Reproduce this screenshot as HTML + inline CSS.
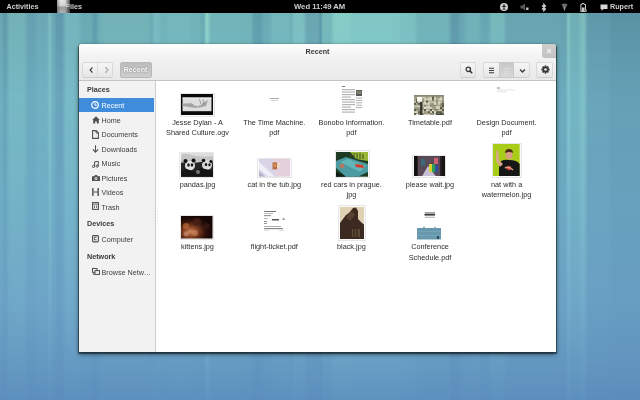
<!DOCTYPE html>
<html><head><meta charset="utf-8"><style>
*{margin:0;padding:0;box-sizing:border-box}
html,body{width:640px;height:400px;overflow:hidden;background:#6aa8b8;font-family:"Liberation Sans",sans-serif}
#wall{position:absolute;left:0;top:0;width:640px;height:400px;
 background:linear-gradient(180deg,#6aa8b6 0px,#6aa6ba 170px,#689ec0 300px,#5a8cbc 400px)}
#tint{position:absolute;left:0;top:0;width:640px;height:400px;background:linear-gradient(180deg,rgba(138,212,248,0) 14px,rgba(138,212,248,.2) 100px,rgba(128,192,245,.25) 200px,rgba(128,176,248,.2) 300px,rgba(100,140,220,.08) 400px)}
#stripes{position:absolute;left:0;top:0;width:640px;height:400px;background:linear-gradient(90deg,#68a6b0 0.83px,#68a6b0 1.67px,#5e9aa8 4.17px,#5e9aa8 5.83px,#72b2b6 9.50px,#72b2b6 24.00px,#64a0b0 28.00px,#64a0b0 34.00px,#6aa8b4 38.00px,#6aa8b4 47.00px,#7cbcbe 49.67px,#7cbcbe 50.33px,#6aa8b4 52.33px,#6aa8b4 53.67px,#5f98ac 57.00px,#5f98ac 62.00px,#74b4bb 66.00px,#74b4bb 78.00px,#6aaab2 82.00px,#6aaab2 90.50px,#5e9cab 94.17px,#5e9cab 95.83px,#6caeb4 99.00px,#6caeb4 100.50px,#72b2b6 104.00px,#72b2b6 148.00px,#6aaab2 150.83px,#6aaab2 151.67px,#78b8be 154.50px,#78b8be 158.00px,#70b2b6 162.00px,#70b2b6 165.50px,#74b6ba 169.50px,#74b6ba 189.00px,#70b2b6 193.00px,#70b2b6 199.00px,#6aaab2 202.33px,#6aaab2 203.67px,#8ad0c8 206.33px,#8ad0c8 207.67px,#72b4b8 211.00px,#72b4b8 238.00px,#70b2b6 242.00px,#70b2b6 250.50px,#5e9eab 254.50px,#5e9eab 260.50px,#6aabb3 264.50px,#6aabb3 269.00px,#74b6ba 273.00px,#74b6ba 288.00px,#6eb0b5 290.83px,#6eb0b5 291.67px,#7cbfc0 294.50px,#7cbfc0 303.00px,#68a6b0 307.00px,#68a6b0 318.00px,#5a98a8 320.33px,#5a98a8 320.67px,#74b8b8 323.00px,#74b8b8 330.50px,#86ccc6 334.50px,#86ccc6 349.00px,#80c6c4 353.00px,#80c6c4 398.00px,#7cc0c0 402.00px,#7cc0c0 414.00px,#70b2b6 418.00px,#70b2b6 448.00px,#5e99a9 452.00px,#5e99a9 457.00px,#66a5b0 461.00px,#66a5b0 463.00px,#70b0b6 467.00px,#70b0b6 478.00px,#66a6b0 482.00px,#66a6b0 488.00px,#76b8ba 492.00px,#76b8ba 503.00px,#68a4b0 507.00px,#68a4b0 558.00px,#64a0ae 562.00px,#64a0ae 565.50px,#80c0c0 568.17px,#80c0c0 568.83px,#6eaeb4 571.50px,#6eaeb4 578.00px,#7cbcbc 582.00px,#7cbcbc 584.00px,#6098aa 588.00px,#6098aa 608.00px,#5a92a4 612.00px,#5a92a4 638.00px);
 -webkit-mask-image:linear-gradient(180deg,#000 0px,rgba(0,0,0,.9) 150px,rgba(0,0,0,.45) 290px,rgba(0,0,0,.12) 400px)}
#topbar{position:absolute;left:0;top:0;width:640px;height:13px;background:#000;color:#cfcfcf;font-weight:bold;font-size:7.2px}
#topbar span{position:absolute;top:2px;white-space:nowrap;line-height:9px}
#win{position:absolute;left:79px;top:44px;width:477px;height:308px;background:#fff;border-radius:3px 3px 0 0;
 box-shadow:0 2px 5px rgba(0,0,0,.55),0 1px 1px 1px rgba(0,0,0,.45)}
#hdr{position:absolute;left:0;top:0;width:477px;height:37px;background:linear-gradient(180deg,#fefefe 0,#f3f3f3 35%,#e9e9e9 100%);border-bottom:1px solid #c4c4c4;border-radius:3px 3px 0 0}
#title{position:absolute;left:0;top:3px;width:477px;text-align:center;font-weight:bold;font-size:7.2px;color:#3a3a3a;line-height:9px}
.btn{position:absolute;top:17.5px;height:16px;border:1px solid #d8d8d8;border-bottom-color:#cdcdcd;border-radius:2px;background:linear-gradient(180deg,#f6f6f6,#e6e6e6)}
#side{position:absolute;left:0;top:37px;width:77px;height:271px;background:#f2f2f2;border-right:1px solid #cfcfcf}
.sh{position:absolute;left:8px;font-weight:bold;font-size:7.2px;color:#3a3a3a;line-height:9px}
.si{position:absolute;left:22.5px;font-size:7.2px;color:#3c3c3c;white-space:nowrap;line-height:9px}
.sic{position:absolute;left:11px;width:11px;height:11px}
.ic{position:absolute;left:0;top:0}
.sel{position:absolute;left:0;width:75px;height:14.5px;background:#3f8bdc}
.lbl{position:absolute;width:100px;text-align:center;font-size:7.3px;color:#2c2c2c;white-space:nowrap;line-height:10px}
.th{position:absolute}
</style></head><body>
<div id="wall"></div><div id="stripes"></div><div id="tint"></div>
<div id="topbar" style="filter:blur(0.35px)">
 <span style="left:6.5px">Activities</span>
 <span style="left:65.5px">Files</span>
 <div style="position:absolute;left:57px;top:0;width:13px;height:12.5px;background:linear-gradient(180deg,#e4e4e4 0,#d0d0d0 45%,#9a9a9a 55%,#b0b0b0 100%);-webkit-mask-image:linear-gradient(90deg,rgba(0,0,0,.7) 0,#000 25%,#000 60%,rgba(0,0,0,.35) 100%)"></div>
 <span style="left:294px;font-size:7.7px">Wed 11:49 AM</span>
 <span style="left:610px">Rupert</span>
 <svg style="position:absolute;left:500px;top:2.5px" width="8" height="8" viewBox="0 0 8 8"><circle cx="4" cy="4" r="4" fill="#d0d0d0"/><circle cx="4" cy="2.2" r="0.9" fill="#222"/><path d="M1.8 3.5 H6.2 M4 3.5 V5.2 L2.8 7 M4 5.2 L5.2 7" stroke="#222" stroke-width="0.9" fill="none"/></svg>
 <svg style="position:absolute;left:519.5px;top:3px" width="9" height="8" viewBox="0 0 9 8"><path d="M0.5 2.5 H2.5 L5 0.5 V7.5 L2.5 5.5 H0.5 Z" fill="#5a5a5a"/><rect x="6" y="4.5" width="2.5" height="2.5" fill="#bbb"/></svg>
 <svg style="position:absolute;left:541px;top:2.5px" width="6" height="9" viewBox="0 0 6 9"><path d="M1 2.5 L4.5 6 L2.8 7.8 V1.2 L4.5 3 L1 6.5" fill="none" stroke="#d8d8d8" stroke-width="1.1"/></svg>
 <svg style="position:absolute;left:560.5px;top:3px" width="7" height="8" viewBox="0 0 7 8"><path d="M0.5 1.5 Q3.5 -0.5 6.5 1.5 L3.5 7.5 Z" fill="#6a6a6a"/><rect x="3" y="4" width="1" height="3.5" fill="#999"/></svg>
 <svg style="position:absolute;left:579.5px;top:2.5px" width="7" height="9" viewBox="0 0 7 9"><path d="M2 0.5 H4 V1.5 H5.5 V8.5 H0.8 V1.5 H2 Z" fill="none" stroke="#c8c8c8" stroke-width="1"/><rect x="1.6" y="4.5" width="3" height="3.5" fill="#c8c8c8"/><rect x="5" y="6.5" width="2" height="2" fill="#888"/></svg>
 <svg style="position:absolute;left:600px;top:3.5px" width="8" height="7" viewBox="0 0 8 7"><path d="M0.5 0.5 H7.5 V5 H3.5 L1.5 6.8 V5 H0.5 Z" fill="#d8d8d8"/></svg>
</div>
<div id="win" style="filter:blur(0.4px)">
 <div id="hdr">
  <div id="title">Recent</div>
  <div class="btn" style="left:2.5px;width:31px"><div style="position:absolute;left:14.5px;top:0;width:1px;height:14px;background:#dcdcdc"></div>
   <svg style="position:absolute;left:5px;top:3.5px" width="7" height="8" viewBox="0 0 7 8"><path d="M4.5 1.3 L2.1 4 L4.5 6.7" fill="none" stroke="#404040" stroke-width="1.2"/></svg>
   <svg style="position:absolute;left:20px;top:3.5px" width="7" height="8" viewBox="0 0 7 8"><path d="M2.4 1.2 L5 4 L2.4 6.8" fill="none" stroke="#b0b0b0" stroke-width="1.3"/></svg></div>
  <div class="btn" style="left:40.5px;width:32px;background:linear-gradient(180deg,#bcbcbc,#cdcdcd);border-color:#b8b8b8"></div>
  <div style="position:absolute;left:40.5px;top:20.5px;width:32px;text-align:center;font-size:7.1px;font-weight:bold;color:#fff;line-height:10px;text-shadow:0 0 1.5px rgba(0,0,0,.5)">Recent</div>
  <div class="btn" style="left:380.8px;width:16px"><svg style="position:absolute;left:4px;top:3.5px" width="8" height="8" viewBox="0 0 8 8"><circle cx="3.3" cy="3.3" r="2.2" fill="none" stroke="#383838" stroke-width="1.3"/><path d="M4.9 4.9 L7.2 7.2" stroke="#383838" stroke-width="1.6"/></svg></div>
  <div class="btn" style="left:403.5px;width:47.5px"></div>
  <div class="btn" style="left:419.8px;width:15.2px;background:linear-gradient(180deg,#c8c8c8,#d8d8d8);border-color:#c8c8c8;border-radius:0"></div>
  <svg style="position:absolute;left:409px;top:23px" width="7" height="7" viewBox="0 0 7 7"><path d="M1 1.3 H6 M1 3.5 H6 M1 5.7 H6" stroke="#3a3a3a" stroke-width="1.1"/></svg>
  <svg style="position:absolute;left:423.5px;top:22.5px" width="8" height="8" viewBox="0 0 8 8"><path d="M1 1.5 H7 M1 4 H7 M1 6.5 H7" stroke="#e8e8e8" stroke-width="0.9" stroke-dasharray="1.2 0.8"/></svg>
  <svg style="position:absolute;left:440px;top:23.5px" width="7" height="6" viewBox="0 0 7 6"><path d="M1 1.5 L3.5 4 L6 1.5" fill="none" stroke="#3a3a3a" stroke-width="1.3"/></svg>
  <div class="btn" style="left:457.3px;width:16.7px"><svg style="position:absolute;left:3.3px;top:2.7px" width="9" height="9" viewBox="0 0 9 9"><circle cx="4.5" cy="4.5" r="3" fill="#363636"/><rect x="3.6" y="0.4" width="1.8" height="2.2" fill="#363636" transform="rotate(0 4.5 4.5)"/><rect x="3.6" y="0.4" width="1.8" height="2.2" fill="#363636" transform="rotate(45 4.5 4.5)"/><rect x="3.6" y="0.4" width="1.8" height="2.2" fill="#363636" transform="rotate(90 4.5 4.5)"/><rect x="3.6" y="0.4" width="1.8" height="2.2" fill="#363636" transform="rotate(135 4.5 4.5)"/><rect x="3.6" y="0.4" width="1.8" height="2.2" fill="#363636" transform="rotate(180 4.5 4.5)"/><rect x="3.6" y="0.4" width="1.8" height="2.2" fill="#363636" transform="rotate(225 4.5 4.5)"/><rect x="3.6" y="0.4" width="1.8" height="2.2" fill="#363636" transform="rotate(270 4.5 4.5)"/><rect x="3.6" y="0.4" width="1.8" height="2.2" fill="#363636" transform="rotate(315 4.5 4.5)"/><circle cx="4.5" cy="4.5" r="1.3" fill="#ececec"/></svg></div>
  <div style="position:absolute;left:462.5px;top:0;width:14.5px;height:13.5px;background:linear-gradient(180deg,#cdcdcd,#c2c2c2);border-radius:0 3px 0 3px"><svg style="position:absolute;left:4.2px;top:3.6px" width="6" height="6" viewBox="0 0 6 6"><path d="M1 1 L5 5 M5 1 L1 5" stroke="#f0f0f0" stroke-width="1.1"/></svg></div>
 </div>
 <div id="side"><div class="sh" style="top:4.1px">Places</div><div class="sel" style="top:16.5px"></div><div class="si" style="top:19.9px;color:#fff">Recent</div><div class="si" style="top:34.5px;color:#3c3c3c">Home</div><div class="si" style="top:49.0px;color:#3c3c3c">Documents</div><div class="si" style="top:63.5px;color:#3c3c3c">Downloads</div><div class="si" style="top:78.1px;color:#3c3c3c">Music</div><div class="si" style="top:92.5px;color:#3c3c3c">Pictures</div><div class="si" style="top:107.0px;color:#3c3c3c">Videos</div><div class="si" style="top:121.5px;color:#3c3c3c">Trash</div><div class="sh" style="top:137.5px">Devices</div><div class="si" style="top:153.5px">Computer</div><div class="sh" style="top:170.5px">Network</div><div class="si" style="top:186.5px">Browse Netw…</div><svg style="position:absolute;left:12.3px;top:20.0px" width="8" height="8" viewBox="0 0 8 8"><circle cx="4" cy="4" r="3.3" fill="none" stroke="#fff" stroke-width="1.2"/><path d="M4 1.8 V4.2 H5.8" fill="none" stroke="#fff" stroke-width="1"/></svg><svg style="position:absolute;left:12.8px;top:35.2px" width="8" height="8" viewBox="0 0 8 8"><path d="M4 0.3 L7.8 4 H6.8 V7.6 H4.9 V5.4 H3.1 V7.6 H1.2 V4 H0.2 Z" fill="#505050"/></svg><svg style="position:absolute;left:13.0px;top:49.0px" width="7" height="9" viewBox="0 0 7 9"><path d="M0.6 0.6 H4.2 L6.4 2.8 V8.4 H0.6 Z" fill="none" stroke="#505050" stroke-width="1.1"/><path d="M4 0.6 V3 H6.4" fill="none" stroke="#505050" stroke-width="0.9"/></svg><svg style="position:absolute;left:13.0px;top:64.0px" width="7" height="8" viewBox="0 0 7 8"><path d="M3.5 0.3 V7 M0.8 4.4 L3.5 7.2 L6.2 4.4" fill="none" stroke="#505050" stroke-width="1.1"/></svg><svg style="position:absolute;left:12.6px;top:79.6px" width="7" height="7" viewBox="0 0 7 7"><path d="M2.6 5.6 V0.8 L6.3 0.3 V5" fill="none" stroke="#505050" stroke-width="1"/><circle cx="1.5" cy="5.5" r="1.1" fill="none" stroke="#505050" stroke-width="1"/><circle cx="5.2" cy="5.1" r="1.1" fill="none" stroke="#505050" stroke-width="1"/></svg><svg style="position:absolute;left:12.6px;top:94.2px" width="8" height="6" viewBox="0 0 8 6"><path d="M0 1.2 H2.3 L3 0 H5 L5.7 1.2 H8 V6 H0 Z" fill="#505050"/><circle cx="4" cy="3.5" r="1.5" fill="#f2f2f2"/><circle cx="4" cy="3.5" r="0.7" fill="#505050"/></svg><svg style="position:absolute;left:12.6px;top:107.4px" width="7" height="8" viewBox="0 0 7 8"><path d="M0.8 0 V8 M6.2 0 V8 M0.8 4 H6.2" fill="none" stroke="#505050" stroke-width="1.2"/><path d="M0 1.3 H1.6 M0 2.8 H1.6 M0 5.2 H1.6 M0 6.7 H1.6 M5.4 1.3 H7 M5.4 2.8 H7 M5.4 5.2 H7 M5.4 6.7 H7" stroke="#505050" stroke-width="0.7"/></svg><svg style="position:absolute;left:12.6px;top:121.2px" width="7" height="8" viewBox="0 0 7 8"><rect x="0.6" y="0.6" width="5.8" height="6.8" fill="none" stroke="#505050" stroke-width="1.1"/><path d="M0.6 2.2 H6.4 M2.5 3.6 V6 M4.5 3.6 V6" stroke="#505050" stroke-width="0.8"/></svg><svg style="position:absolute;left:13.0px;top:154.0px" width="7" height="7.5" viewBox="0 0 7 7.5"><rect x="0.6" y="0.6" width="5.8" height="6.3" rx="0.8" fill="none" stroke="#505050" stroke-width="1.1"/><path d="M4.6 2.3 H2.3 V4.8 H4.6" fill="none" stroke="#505050" stroke-width="0.9"/></svg><svg style="position:absolute;left:12.6px;top:187.2px" width="8" height="7" viewBox="0 0 8 7"><rect x="0.5" y="0.5" width="4.5" height="3.8" fill="none" stroke="#505050" stroke-width="1"/><rect x="3" y="2.6" width="4.5" height="3.8" fill="#f2f2f2" stroke="#505050" stroke-width="1"/><path d="M1.3 4.6 V6.4 H3" stroke="#505050" stroke-width="0.8" fill="none"/></svg></div>
 <div class="th" style="left:100.5px;top:48.5px;width:35.0px;height:24.0px;background:#fafafa;border:1px solid #e6e6e6"></div><svg class="th" style="left:102.0px;top:50.0px" width="32.0" height="21.0" viewBox="0 0 32.0 21.0" preserveAspectRatio="none"><rect width="32" height="21" fill="#0a0a0a"/><rect x="1.5" y="3.4" width="29" height="13.8" fill="#dedede"/><path d="M1.5 10 Q8 8 13 11 T22 9 L27 6 L25 12 Q16 15 8 13 L1.5 12 Z" fill="#a4a4a4"/><path d="M18 4 L20 10 M22 5 L23 10 M9 9 L12 11" stroke="#8a8a8a" stroke-width=".8"/><rect x="1.5" y="3.4" width="29" height="2" fill="#eee" opacity=".6"/></svg><div class="lbl" style="left:68.5px;top:73.6px">Jesse Dylan - A</div><div class="lbl" style="left:68.5px;top:84.2px">Shared Culture.ogv</div><svg class="th" style="left:191.0px;top:53.0px" width="9.0" height="6.0" viewBox="0 0 9.0 6.0" preserveAspectRatio="none"><rect x="0" y="1" width="9" height="1" fill="#aaa"/><rect x="1" y="3" width="7" height="0.8" fill="#ccc"/></svg><div class="lbl" style="left:145.3px;top:73.6px">The Time Machine.</div><div class="lbl" style="left:145.3px;top:84.2px">pdf</div><svg class="th" style="left:261.5px;top:41.0px" width="22.5" height="30.0" viewBox="0 0 22.5 30.0" preserveAspectRatio="none"><rect width="22.5" height="30" fill="#fff"/><rect x="1" y="1" width="3" height="1" fill="#777"/><rect x="1" y="4.0" width="13" height="1.2" fill="#b4b4b4"/><rect x="1" y="6.5" width="13" height="1.2" fill="#b4b4b4"/><rect x="1" y="9.0" width="13" height="1.2" fill="#b4b4b4"/><rect x="1" y="11.5" width="9" height="1.2" fill="#b4b4b4"/><rect x="1" y="14.0" width="13" height="1.2" fill="#b4b4b4"/><rect x="1" y="16.5" width="13" height="1.2" fill="#b4b4b4"/><rect x="1" y="19.0" width="13" height="1.2" fill="#b4b4b4"/><rect x="1" y="21.5" width="9" height="1.2" fill="#b4b4b4"/><rect x="1" y="24.0" width="13" height="1.2" fill="#b4b4b4"/><rect x="1" y="26.5" width="13" height="1.2" fill="#b4b4b4"/><rect x="15" y="5" width="6" height="6" fill="#5a5a58"/><rect x="15.5" y="6" width="5" height="3" fill="#808070"/><rect x="15" y="12.5" width="6" height="1" fill="#b0b0b0"/><rect x="15" y="14.9" width="6" height="1" fill="#b0b0b0"/><rect x="15" y="17.3" width="6" height="1" fill="#b0b0b0"/><rect x="15" y="19.7" width="6" height="1" fill="#b0b0b0"/><rect x="15" y="22.1" width="6" height="1" fill="#b0b0b0"/></svg><div class="lbl" style="left:222.4px;top:73.6px">Bonobo Information.</div><div class="lbl" style="left:222.4px;top:84.2px">pdf</div><svg class="th" style="left:335.0px;top:50.9px" width="30.0" height="20.5" viewBox="0 0 30.0 20.5" preserveAspectRatio="none"><rect width="30" height="20.5" fill="#d4d2b4"/><rect x="0.00" y="1.50" width="2" height="2.1" fill="#a8a68a"/><rect x="0.00" y="3.60" width="2" height="2.1" fill="#a8a68a"/><rect x="0.00" y="5.70" width="2" height="2.1" fill="#e0dec4"/><rect x="0.00" y="7.80" width="2" height="2.1" fill="#5a5a48"/><rect x="0.00" y="9.90" width="2" height="2.1" fill="#e0dec4"/><rect x="0.00" y="12.00" width="2" height="2.1" fill="#a8a68a"/><rect x="0.00" y="14.10" width="2" height="2.1" fill="#5a5a48"/><rect x="0.00" y="16.20" width="2" height="2.1" fill="#e0dec4"/><rect x="0.00" y="18.30" width="2" height="2.1" fill="#5a5a48"/><rect x="2.00" y="1.50" width="2" height="2.1" fill="#a8a68a"/><rect x="2.00" y="3.60" width="2" height="2.1" fill="#5a5a48"/><rect x="2.00" y="5.70" width="2" height="2.1" fill="#5a5a48"/><rect x="2.00" y="7.80" width="2" height="2.1" fill="#a8a68a"/><rect x="2.00" y="9.90" width="2" height="2.1" fill="#e0dec4"/><rect x="2.00" y="12.00" width="2" height="2.1" fill="#a8a68a"/><rect x="2.00" y="14.10" width="2" height="2.1" fill="#a8a68a"/><rect x="2.00" y="16.20" width="2" height="2.1" fill="#e0dec4"/><rect x="2.00" y="18.30" width="2" height="2.1" fill="#f4f2e2"/><rect x="4.00" y="1.50" width="2" height="2.1" fill="#e0dec4"/><rect x="4.00" y="3.60" width="2" height="2.1" fill="#a8a68a"/><rect x="4.00" y="5.70" width="2" height="2.1" fill="#f4f2e2"/><rect x="4.00" y="7.80" width="2" height="2.1" fill="#5a5a48"/><rect x="4.00" y="9.90" width="2" height="2.1" fill="#f4f2e2"/><rect x="4.00" y="12.00" width="2" height="2.1" fill="#a8a68a"/><rect x="4.00" y="14.10" width="2" height="2.1" fill="#a8a68a"/><rect x="4.00" y="16.20" width="2" height="2.1" fill="#5a5a48"/><rect x="4.00" y="18.30" width="2" height="2.1" fill="#a8a68a"/><rect x="6.00" y="1.50" width="2" height="2.1" fill="#e0dec4"/><rect x="6.00" y="3.60" width="2" height="2.1" fill="#a8a68a"/><rect x="6.00" y="5.70" width="2" height="2.1" fill="#e0dec4"/><rect x="6.00" y="7.80" width="2" height="2.1" fill="#e0dec4"/><rect x="6.00" y="9.90" width="2" height="2.1" fill="#a8a68a"/><rect x="6.00" y="12.00" width="2" height="2.1" fill="#e0dec4"/><rect x="6.00" y="14.10" width="2" height="2.1" fill="#5a5a48"/><rect x="6.00" y="16.20" width="2" height="2.1" fill="#5a5a48"/><rect x="6.00" y="18.30" width="2" height="2.1" fill="#a8a68a"/><rect x="8.00" y="1.50" width="2" height="2.1" fill="#e0dec4"/><rect x="8.00" y="3.60" width="2" height="2.1" fill="#a8a68a"/><rect x="8.00" y="5.70" width="2" height="2.1" fill="#a8a68a"/><rect x="8.00" y="7.80" width="2" height="2.1" fill="#e0dec4"/><rect x="8.00" y="9.90" width="2" height="2.1" fill="#e0dec4"/><rect x="8.00" y="12.00" width="2" height="2.1" fill="#a8a68a"/><rect x="8.00" y="14.10" width="2" height="2.1" fill="#e0dec4"/><rect x="8.00" y="16.20" width="2" height="2.1" fill="#e0dec4"/><rect x="8.00" y="18.30" width="2" height="2.1" fill="#a8a68a"/><rect x="10.00" y="1.50" width="2" height="2.1" fill="#e0dec4"/><rect x="10.00" y="3.60" width="2" height="2.1" fill="#e0dec4"/><rect x="10.00" y="5.70" width="2" height="2.1" fill="#f4f2e2"/><rect x="10.00" y="7.80" width="2" height="2.1" fill="#e0dec4"/><rect x="10.00" y="9.90" width="2" height="2.1" fill="#a8a68a"/><rect x="10.00" y="12.00" width="2" height="2.1" fill="#f4f2e2"/><rect x="10.00" y="14.10" width="2" height="2.1" fill="#5a5a48"/><rect x="10.00" y="16.20" width="2" height="2.1" fill="#a8a68a"/><rect x="10.00" y="18.30" width="2" height="2.1" fill="#e0dec4"/><rect x="12.00" y="1.50" width="2" height="2.1" fill="#a8a68a"/><rect x="12.00" y="3.60" width="2" height="2.1" fill="#e0dec4"/><rect x="12.00" y="5.70" width="2" height="2.1" fill="#5a5a48"/><rect x="12.00" y="7.80" width="2" height="2.1" fill="#e0dec4"/><rect x="12.00" y="9.90" width="2" height="2.1" fill="#e0dec4"/><rect x="12.00" y="12.00" width="2" height="2.1" fill="#e0dec4"/><rect x="12.00" y="14.10" width="2" height="2.1" fill="#f4f2e2"/><rect x="12.00" y="16.20" width="2" height="2.1" fill="#a8a68a"/><rect x="12.00" y="18.30" width="2" height="2.1" fill="#e0dec4"/><rect x="14.00" y="1.50" width="2" height="2.1" fill="#e0dec4"/><rect x="14.00" y="3.60" width="2" height="2.1" fill="#e0dec4"/><rect x="14.00" y="5.70" width="2" height="2.1" fill="#e0dec4"/><rect x="14.00" y="7.80" width="2" height="2.1" fill="#e0dec4"/><rect x="14.00" y="9.90" width="2" height="2.1" fill="#f4f2e2"/><rect x="14.00" y="12.00" width="2" height="2.1" fill="#e0dec4"/><rect x="14.00" y="14.10" width="2" height="2.1" fill="#e0dec4"/><rect x="14.00" y="16.20" width="2" height="2.1" fill="#5a5a48"/><rect x="14.00" y="18.30" width="2" height="2.1" fill="#e0dec4"/><rect x="16.00" y="1.50" width="2" height="2.1" fill="#e0dec4"/><rect x="16.00" y="3.60" width="2" height="2.1" fill="#f4f2e2"/><rect x="16.00" y="5.70" width="2" height="2.1" fill="#e0dec4"/><rect x="16.00" y="7.80" width="2" height="2.1" fill="#a8a68a"/><rect x="16.00" y="9.90" width="2" height="2.1" fill="#a8a68a"/><rect x="16.00" y="12.00" width="2" height="2.1" fill="#e0dec4"/><rect x="16.00" y="14.10" width="2" height="2.1" fill="#5a5a48"/><rect x="16.00" y="16.20" width="2" height="2.1" fill="#e0dec4"/><rect x="16.00" y="18.30" width="2" height="2.1" fill="#a8a68a"/><rect x="18.00" y="1.50" width="2" height="2.1" fill="#5a5a48"/><rect x="18.00" y="3.60" width="2" height="2.1" fill="#5a5a48"/><rect x="18.00" y="5.70" width="2" height="2.1" fill="#e0dec4"/><rect x="18.00" y="7.80" width="2" height="2.1" fill="#a8a68a"/><rect x="18.00" y="9.90" width="2" height="2.1" fill="#a8a68a"/><rect x="18.00" y="12.00" width="2" height="2.1" fill="#a8a68a"/><rect x="18.00" y="14.10" width="2" height="2.1" fill="#f4f2e2"/><rect x="18.00" y="16.20" width="2" height="2.1" fill="#5a5a48"/><rect x="18.00" y="18.30" width="2" height="2.1" fill="#a8a68a"/><rect x="20.00" y="1.50" width="2" height="2.1" fill="#e0dec4"/><rect x="20.00" y="3.60" width="2" height="2.1" fill="#f4f2e2"/><rect x="20.00" y="5.70" width="2" height="2.1" fill="#e0dec4"/><rect x="20.00" y="7.80" width="2" height="2.1" fill="#f4f2e2"/><rect x="20.00" y="9.90" width="2" height="2.1" fill="#a8a68a"/><rect x="20.00" y="12.00" width="2" height="2.1" fill="#a8a68a"/><rect x="20.00" y="14.10" width="2" height="2.1" fill="#a8a68a"/><rect x="20.00" y="16.20" width="2" height="2.1" fill="#f4f2e2"/><rect x="20.00" y="18.30" width="2" height="2.1" fill="#f4f2e2"/><rect x="22.00" y="1.50" width="2" height="2.1" fill="#a8a68a"/><rect x="22.00" y="3.60" width="2" height="2.1" fill="#a8a68a"/><rect x="22.00" y="5.70" width="2" height="2.1" fill="#a8a68a"/><rect x="22.00" y="7.80" width="2" height="2.1" fill="#a8a68a"/><rect x="22.00" y="9.90" width="2" height="2.1" fill="#e0dec4"/><rect x="22.00" y="12.00" width="2" height="2.1" fill="#e0dec4"/><rect x="22.00" y="14.10" width="2" height="2.1" fill="#a8a68a"/><rect x="22.00" y="16.20" width="2" height="2.1" fill="#5a5a48"/><rect x="22.00" y="18.30" width="2" height="2.1" fill="#a8a68a"/><rect x="24.00" y="1.50" width="2" height="2.1" fill="#a8a68a"/><rect x="24.00" y="3.60" width="2" height="2.1" fill="#e0dec4"/><rect x="24.00" y="5.70" width="2" height="2.1" fill="#f4f2e2"/><rect x="24.00" y="7.80" width="2" height="2.1" fill="#e0dec4"/><rect x="24.00" y="9.90" width="2" height="2.1" fill="#e0dec4"/><rect x="24.00" y="12.00" width="2" height="2.1" fill="#e0dec4"/><rect x="24.00" y="14.10" width="2" height="2.1" fill="#e0dec4"/><rect x="24.00" y="16.20" width="2" height="2.1" fill="#5a5a48"/><rect x="24.00" y="18.30" width="2" height="2.1" fill="#f4f2e2"/><rect x="26.00" y="1.50" width="2" height="2.1" fill="#e0dec4"/><rect x="26.00" y="3.60" width="2" height="2.1" fill="#f4f2e2"/><rect x="26.00" y="5.70" width="2" height="2.1" fill="#e0dec4"/><rect x="26.00" y="7.80" width="2" height="2.1" fill="#a8a68a"/><rect x="26.00" y="9.90" width="2" height="2.1" fill="#a8a68a"/><rect x="26.00" y="12.00" width="2" height="2.1" fill="#5a5a48"/><rect x="26.00" y="14.10" width="2" height="2.1" fill="#e0dec4"/><rect x="26.00" y="16.20" width="2" height="2.1" fill="#5a5a48"/><rect x="26.00" y="18.30" width="2" height="2.1" fill="#5a5a48"/><rect x="28.00" y="1.50" width="2" height="2.1" fill="#a8a68a"/><rect x="28.00" y="3.60" width="2" height="2.1" fill="#a8a68a"/><rect x="28.00" y="5.70" width="2" height="2.1" fill="#a8a68a"/><rect x="28.00" y="7.80" width="2" height="2.1" fill="#5a5a48"/><rect x="28.00" y="9.90" width="2" height="2.1" fill="#5a5a48"/><rect x="28.00" y="12.00" width="2" height="2.1" fill="#a8a68a"/><rect x="28.00" y="14.10" width="2" height="2.1" fill="#5a5a48"/><rect x="28.00" y="16.20" width="2" height="2.1" fill="#a8a68a"/><rect x="28.00" y="18.30" width="2" height="2.1" fill="#5a5a48"/><rect x="-0.3" y="1.5" width="0.6" height="19" fill="#6a6a58" opacity=".45"/><rect x="1.7" y="1.5" width="0.6" height="19" fill="#6a6a58" opacity=".45"/><rect x="3.7" y="1.5" width="0.6" height="19" fill="#6a6a58" opacity=".45"/><rect x="5.7" y="1.5" width="0.6" height="19" fill="#6a6a58" opacity=".45"/><rect x="7.7" y="1.5" width="0.6" height="19" fill="#6a6a58" opacity=".45"/><rect x="9.7" y="1.5" width="0.6" height="19" fill="#6a6a58" opacity=".45"/><rect x="11.7" y="1.5" width="0.6" height="19" fill="#6a6a58" opacity=".45"/><rect x="13.7" y="1.5" width="0.6" height="19" fill="#6a6a58" opacity=".45"/><rect x="15.7" y="1.5" width="0.6" height="19" fill="#6a6a58" opacity=".45"/><rect x="17.7" y="1.5" width="0.6" height="19" fill="#6a6a58" opacity=".45"/><rect x="19.7" y="1.5" width="0.6" height="19" fill="#6a6a58" opacity=".45"/><rect x="21.7" y="1.5" width="0.6" height="19" fill="#6a6a58" opacity=".45"/><rect x="23.7" y="1.5" width="0.6" height="19" fill="#6a6a58" opacity=".45"/><rect x="25.7" y="1.5" width="0.6" height="19" fill="#6a6a58" opacity=".45"/><rect x="27.7" y="1.5" width="0.6" height="19" fill="#6a6a58" opacity=".45"/><rect x="29.7" y="1.5" width="0.6" height="19" fill="#6a6a58" opacity=".45"/><rect x="0" y="1.5" width="30" height="0.6" fill="#555545" opacity=".6"/><rect x="0" y="5.7" width="30" height="0.6" fill="#555545" opacity=".6"/><rect x="0" y="9.9" width="30" height="0.6" fill="#555545" opacity=".6"/><rect x="0" y="14.1" width="30" height="0.6" fill="#555545" opacity=".6"/><rect x="0" y="18.3" width="30" height="0.6" fill="#555545" opacity=".6"/><rect x="0" y="0" width="30" height="1.5" fill="#8a8a7a"/><rect x="6" y="7" width="2.5" height="13" fill="#3a3a30"/><rect x="3" y="2" width="5" height="4.5" fill="#f8f8f0"/><rect x="22" y="18.5" width="6" height="2" fill="#444438"/></svg><div class="lbl" style="left:301.0px;top:73.6px">Timetable.pdf</div><svg class="th" style="left:418.0px;top:43.0px" width="19.0" height="7.0" viewBox="0 0 19.0 7.0" preserveAspectRatio="none"><rect x="0" y="0.5" width="3" height="1" fill="#888"/><rect x="0" y="2.5" width="18" height="0.8" fill="#ddd"/><rect x="0" y="4.3" width="10" height="0.8" fill="#ddd"/></svg><div class="lbl" style="left:377.6px;top:73.6px">Design Document.</div><div class="lbl" style="left:377.6px;top:84.2px">pdf</div><div class="th" style="left:100.2px;top:107.6px;width:35.3px;height:26.8px;background:#fafafa;border:1px solid #e6e6e6"></div><svg class="th" style="left:101.7px;top:109.1px" width="32.3" height="23.8" viewBox="0 0 32.3 23.8" preserveAspectRatio="none"><rect width="32.3" height="23.8" fill="#262626"/><rect width="32.3" height="9" fill="#c4c4c4"/><path d="M0 0 H32.3 V3 Q20 5 10 2 T0 4 Z" fill="#dedede"/><path d="M0 9 Q8 6 16 9 T32.3 8 V10 H0 Z" fill="#8a8a8a"/><circle cx="9" cy="12.5" r="5" fill="#e4e4e4"/><circle cx="26" cy="12" r="5" fill="#dadada"/><circle cx="4.5" cy="8" r="2" fill="#111"/><circle cx="12.5" cy="7.5" r="2" fill="#111"/><circle cx="22.5" cy="7.5" r="1.8" fill="#111"/><circle cx="30" cy="8.5" r="1.6" fill="#111"/><ellipse cx="7.5" cy="12" rx="1.3" ry="1.7" fill="#1a1a1a"/><ellipse cx="11" cy="12" rx="1.3" ry="1.7" fill="#1a1a1a"/><ellipse cx="25" cy="11.5" rx="1.3" ry="1.6" fill="#1a1a1a"/><ellipse cx="28.5" cy="11.8" rx="1.2" ry="1.5" fill="#1a1a1a"/><path d="M0 18 L6 16 L14 19 L20 15 L32.3 18 V23.8 H0 Z" fill="#151515"/><circle cx="17" cy="19" r="2" fill="#777"/></svg><div class="lbl" style="left:68.5px;top:135.8px">pandas.jpg</div><div class="th" style="left:178.0px;top:113.6px;width:34.5px;height:20.7px;background:#fafafa;border:1px solid #e6e6e6"></div><svg class="th" style="left:179.5px;top:115.1px" width="31.5" height="17.7" viewBox="0 0 31.5 17.7" preserveAspectRatio="none"><rect width="31.5" height="17.6" fill="#e4d0dc"/><path d="M0 0 H13 L18 17.6 H0 Z" fill="#d8d4e6"/><path d="M0 3 L16 17.6 H9 L0 10 Z" fill="#f0eef6"/><path d="M0 12 L6 17.6 H0 Z" fill="#b8b0cc"/><rect x="13.5" y="3.4" width="4.5" height="7" fill="#b87040"/><rect x="14.5" y="5" width="2.5" height="3" fill="#d89060"/><rect x="18" y="4" width="3" height="5" fill="#f0d8c8"/></svg><div class="lbl" style="left:145.3px;top:135.8px">cat in the tub.jpg</div><div class="th" style="left:255.5px;top:106.4px;width:35.0px;height:27.7px;background:#fafafa;border:1px solid #e6e6e6"></div><svg class="th" style="left:257.0px;top:107.9px" width="32.0" height="24.7" viewBox="0 0 32.0 24.7" preserveAspectRatio="none"><rect width="32" height="24.7" fill="#1e3a22"/><path d="M14 0 H32 V9 L20 7 Z" fill="#9ab838"/><path d="M15 1 V6 M18 1 V6 M21 1 V7 M24 1 V7 M27 2 V7" stroke="#3a4a20" stroke-width="1"/><path d="M0 9 L10 5 L32 12 V20 L22 24.7 H10 L0 16 Z" fill="#4a9aa0"/><path d="M4 10 L12 7 L30 14 L24 20 Z" fill="#62b4b8"/><path d="M19 12 L27 13 L28 16 L20 15 Z" fill="#d83a28"/><circle cx="6" cy="14" r="2.5" fill="#b07a60"/><path d="M0 20 L10 24.7 H0 Z" fill="#0e1a10"/></svg><div class="lbl" style="left:222.4px;top:135.8px">red cars in prague.</div><div class="lbl" style="left:222.4px;top:146.4px">jpg</div><div class="th" style="left:333.3px;top:110.5px;width:34.2px;height:23.4px;background:#fafafa;border:1px solid #e6e6e6"></div><svg class="th" style="left:334.8px;top:112.0px" width="31.2" height="20.4" viewBox="0 0 31.2 20.4" preserveAspectRatio="none"><rect width="31.2" height="20.4" fill="#2a2028"/><rect x="4" y="0" width="22" height="20.4" fill="#5a4a58"/><path d="M8 20.4 L14 10 L22 20.4 Z" fill="#c8c0d8"/><rect x="7" y="3" width="4" height="7" fill="#3a6a7a"/><rect x="20" y="2" width="4" height="6" fill="#d06070"/><rect x="15" y="8" width="3.5" height="8" fill="#d8d030"/><rect x="18" y="8" width="3" height="8" fill="#30a050"/><rect x="21" y="9" width="3" height="7" fill="#3050a0"/><rect x="0" y="0" width="3" height="20.4" fill="#141010"/><rect x="28" y="0" width="3.2" height="20.4" fill="#181410"/></svg><div class="lbl" style="left:301.0px;top:135.8px">please wait.jpg</div><div class="th" style="left:412.9px;top:98.7px;width:29.7px;height:35.0px;background:#fafafa;border:1px solid #e6e6e6"></div><svg class="th" style="left:414.4px;top:100.2px" width="26.7" height="32.0" viewBox="0 0 26.7 32.0" preserveAspectRatio="none"><rect width="26.7" height="32" fill="#a8cc18"/><path d="M6 32 V20 Q8 15 16 16 Q24 16 26.7 20 V32 Z" fill="#161616"/><path d="M3 7 L5 6 L6 16 L10 20 L7 23 L3 17 Z" fill="#d8a888"/><ellipse cx="16" cy="11" rx="3.6" ry="4.3" fill="#d8a080"/><path d="M12 9 Q12 5 16 5 Q20 5 20 9 Q17 7 12 9 Z" fill="#4a2a18"/><circle cx="16" cy="24" r="2.3" fill="#d84040"/><path d="M12 24 Q16 22 20 26" stroke="#d8a080" stroke-width="1.5" fill="none"/></svg><div class="lbl" style="left:377.6px;top:135.8px">nat with a</div><div class="lbl" style="left:377.6px;top:146.4px">watermelon.jpg</div><div class="th" style="left:100.8px;top:170.5px;width:34.4px;height:25.5px;background:#fafafa;border:1px solid #e6e6e6"></div><svg class="th" style="left:102.2px;top:172.0px" width="31.4" height="22.5" viewBox="0 0 31.4 22.5" preserveAspectRatio="none"><defs><radialGradient id="kg" cx="30%" cy="70%" r="70%"><stop offset="0" stop-color="#d08a60"/><stop offset=".3" stop-color="#8a4424"/><stop offset=".7" stop-color="#2e100a"/><stop offset="1" stop-color="#140604"/></radialGradient></defs><rect width="31.5" height="22.5" fill="url(#kg)"/><circle cx="5" cy="10" r="3" fill="#b86838" opacity=".7"/><circle cx="14" cy="17" r="3" fill="#d08860" opacity=".6"/><circle cx="16" cy="6" r="4" fill="#4a2018" opacity=".8"/><circle cx="5" cy="18" r="2.5" fill="#e0a090" opacity=".5"/><circle cx="26" cy="10" r="3" fill="#3a1a18" opacity=".7"/></svg><div class="lbl" style="left:68.5px;top:197.8px">kittens.jpg</div><svg class="th" style="left:184.8px;top:165.6px" width="24.0" height="21.2" viewBox="0 0 24.0 21.2" preserveAspectRatio="none"><rect x="0" y="1" width="12" height="1" fill="#777"/><rect x="0" y="3" width="9" height="0.8" fill="#aaa"/><rect x="0" y="5" width="7" height="1.2" fill="#999"/><rect x="0" y="8" width="4" height="0.8" fill="#aaa"/><rect x="8" y="9" width="7" height="1.5" fill="#555"/><rect x="0" y="11" width="3" height="1" fill="#888"/><rect x="0" y="13" width="3" height="1" fill="#999"/><rect x="0" y="16" width="17" height="0.8" fill="#999"/><rect x="0" y="18" width="19" height="1.2" fill="#888"/><rect x="0" y="20.5" width="5" height="0.6" fill="#bbb"/><rect x="15" y="20.5" width="5" height="0.6" fill="#bbb"/><path d="M18 10 L19.5 7.5 L21 10 Z" fill="#999"/></svg><div class="lbl" style="left:145.3px;top:197.8px">flight-ticket.pdf</div><div class="th" style="left:259.3px;top:161.2px;width:27.7px;height:35.7px;background:#fafafa;border:1px solid #e6e6e6"></div><svg class="th" style="left:260.8px;top:162.7px" width="24.7" height="32.7" viewBox="0 0 24.7 32.7" preserveAspectRatio="none"><rect width="24.7" height="32.7" fill="#e0d0b4"/><path d="M0 32.7 V16 L6 8 L9 6 L13 1 L16 0.5 L18 4 L18 12 L22 16 L24.7 18 V32.7 Z" fill="#3c2a20"/><path d="M6 10 L12 4 L15 8 L10 14 Z" fill="#5a4030"/><path d="M12 22 H20 V30 H12 Z" fill="#6a5a40" opacity=".7"/><path d="M14 22 V30 M17 22 V30" stroke="#2a1a10" stroke-width="1"/></svg><div class="lbl" style="left:222.4px;top:197.8px">black.jpg</div><svg class="th" style="left:337.7px;top:167.3px" width="24.8" height="28.5" viewBox="0 0 24.8 28.5" preserveAspectRatio="none"><rect width="24.8" height="28.5" fill="#fff"/><rect x="8" y="1" width="10" height="0.8" fill="#888"/><rect x="7.5" y="2.6" width="10.5" height="2" fill="#3a3a3a"/><rect x="8" y="5.8" width="10" height="0.8" fill="#999"/><path d="M0 17 H6 L7 15 L8 17 H17 L18 15.5 L19 17 H24.8 V28.5 H0 Z" fill="#6898ae"/><rect x="0" y="20" width="24.8" height="1" fill="#80acc0" opacity=".6"/><rect x="0" y="24" width="24.8" height="1" fill="#80acc0" opacity=".5"/><rect x="20" y="25" width="2" height="3" fill="#2a4a5a"/></svg><div class="lbl" style="left:301.0px;top:198.0px">Conference</div><div class="lbl" style="left:301.0px;top:208.6px">Schedule.pdf</div>
 <div class="th" style="left:74px;top:164px;width:1px;height:1px;background:#e6e6e6"></div><div class="th" style="left:78px;top:164px;width:1px;height:1px;background:#e6e6e6"></div><div class="th" style="left:74px;top:167px;width:1px;height:1px;background:#e6e6e6"></div><div class="th" style="left:78px;top:167px;width:1px;height:1px;background:#e6e6e6"></div><div class="th" style="left:74px;top:170px;width:1px;height:1px;background:#e6e6e6"></div><div class="th" style="left:78px;top:170px;width:1px;height:1px;background:#e6e6e6"></div><div class="th" style="left:74px;top:173px;width:1px;height:1px;background:#e6e6e6"></div><div class="th" style="left:78px;top:173px;width:1px;height:1px;background:#e6e6e6"></div><div class="th" style="left:74px;top:176px;width:1px;height:1px;background:#e6e6e6"></div><div class="th" style="left:78px;top:176px;width:1px;height:1px;background:#e6e6e6"></div><div class="th" style="left:74px;top:179px;width:1px;height:1px;background:#e6e6e6"></div><div class="th" style="left:78px;top:179px;width:1px;height:1px;background:#e6e6e6"></div>
</div>
</body></html>
